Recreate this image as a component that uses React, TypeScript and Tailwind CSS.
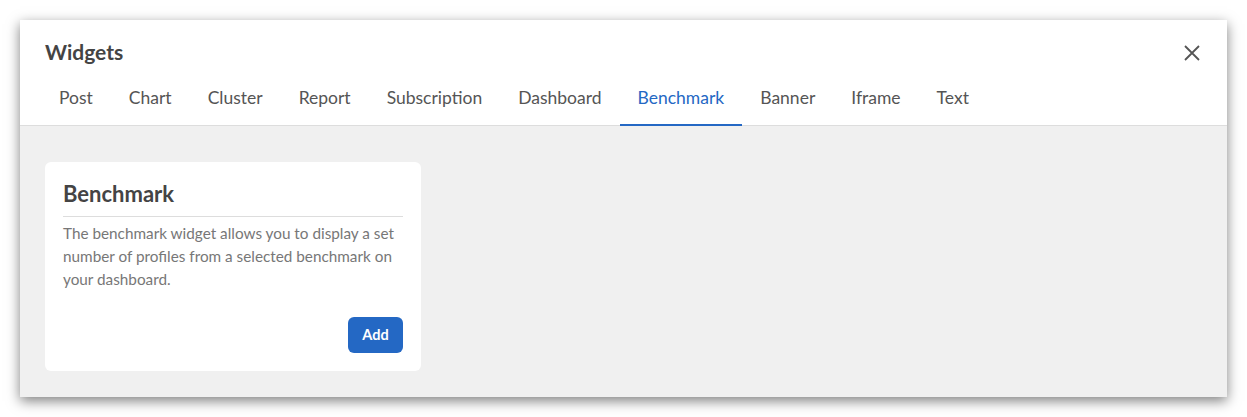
import React from "react";

const tabs = ["Post", "Chart", "Cluster", "Report", "Subscription", "Dashboard", "Benchmark", "Banner", "Iframe", "Text"];

export default function App() {
  return (
    <div className="w-[1247px] h-[417px] bg-white p-[20px]" style={{ fontFamily: "Lato, 'Open Sans', sans-serif" }}>
      <div className="w-[1207px] h-[377px] flex flex-col bg-[#f0f0f0] shadow-[0_4px_12px_rgba(0,0,0,0.5)]">
        <div className="bg-white border-b border-[#dddddd]">
          <div className="flex items-center justify-between pt-[20px] pl-[25px] pr-[27px]">
            <div className="text-[21px] leading-6 font-bold text-[#444444]">Widgets</div>
            <svg width="16" height="16" viewBox="0 0 16 16" className="mt-[2px]">
              <path d="M1 1 L15 15 M15 1 L1 15" stroke="#555555" strokeWidth="1.8" fill="none" />
            </svg>
          </div>
          <div className="flex pl-[21px] mt-[17px] -mb-px">
            {tabs.map((t) => (
              <div
                key={t}
                className={
                  t === "Benchmark"
                    ? "px-[18px] pt-[5px] pb-[14px] text-[17.5px] leading-6 border-b-2 border-[#2468c4] text-[#2468c4]"
                    : "px-[18px] pt-[5px] pb-[14px] text-[17.5px] leading-6 border-b-2 border-transparent text-[#555555]"
                }
              >
                {t}
              </div>
            ))}
          </div>
        </div>
        <div className="pt-[36px] pl-[25px]">
          <div className="w-[376px] h-[209px] bg-white rounded-md px-[18px] pt-[20px] pb-[18px] flex flex-col">
            <div className="text-[22px] leading-6 font-bold text-[#444444] pb-[10px] border-b border-[#dddddd]">Benchmark</div>
            <p className="mt-[5px] text-[15.3px] leading-[23px] text-[#777777]">
              The benchmark widget allows you to display a set number of profiles from a selected benchmark on your dashboard.
            </p>
            <div className="mt-auto flex justify-end">
              <button className="w-[55px] h-[36px] rounded-md bg-[#2468c4] text-white text-[14.5px] font-bold">Add</button>
            </div>
          </div>
        </div>
      </div>
    </div>
  );
}
